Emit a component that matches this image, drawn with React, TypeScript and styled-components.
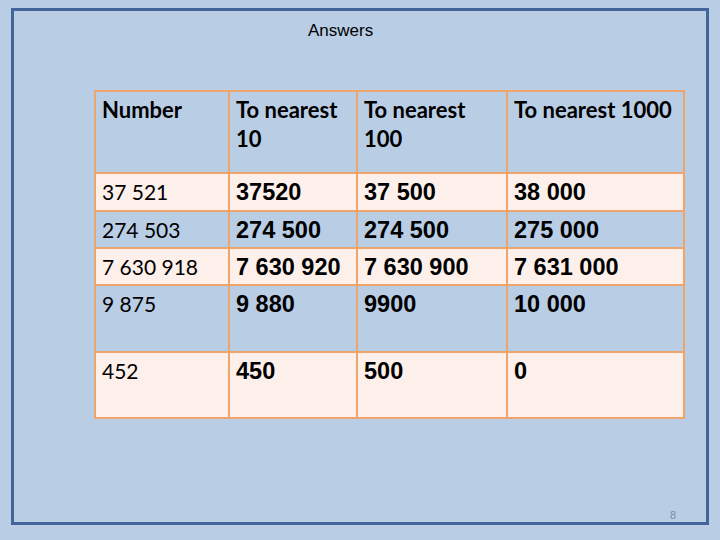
import React from "react";
import styled, { createGlobalStyle } from "styled-components";

const Global = createGlobalStyle`
  html, body { margin: 0; padding: 0; }
  body { background: #b9cde5; width: 720px; height: 540px; overflow: hidden; }
`;

const Frame = styled.div`
  box-sizing: border-box;
  width: 698px;
  height: 517px;
  margin: 8px 0 0 11px;
  border: 3px solid #41649a;
  display: flex;
  flex-direction: column;
`;

const Title = styled.div`
  font-family: "Liberation Sans", Arial, sans-serif;
  font-size: 17px;
  line-height: 20px;
  color: #000;
  padding: 10px 0 0 294px;
`;

const Table = styled.table`
  border-collapse: collapse;
  table-layout: fixed;
  width: 589px;
  margin: 49px 0 0 80px;
`;

const Row = styled.tr<{ $pale?: boolean; $h: number }>`
  height: ${(p) => p.$h}px;
  background: ${(p) => (p.$pale ? "#fdefe9" : "#b9cde5")};
`;

const HeadCell = styled.th`
  border: 2px solid #eea46a;
  text-align: left;
  vertical-align: top;
  padding: 3px 6px 0 6px;
  font-family: Lato, "Open Sans", sans-serif;
  font-weight: 700;
  font-size: 22px;
  line-height: 29px;
  color: #000;
`;

const Cell = styled.td<{ $plain?: boolean }>`
  border: 2px solid #eea46a;
  text-align: left;
  vertical-align: top;
  padding: 4px 6px 0 6px;
  color: #000;
  white-space: nowrap;
  font-family: ${(p) =>
    p.$plain ? 'Lato, "Open Sans", sans-serif' : '"Liberation Sans", Arial, sans-serif'};
  font-weight: ${(p) => (p.$plain ? 400 : 700)};
  font-size: ${(p) => (p.$plain ? "21px" : "23.5px")};
  line-height: 28px;
`;

const Footer = styled.div`
  margin-top: auto;
  text-align: right;
  padding: 0 30px 1px 0;
  font-family: "Liberation Sans", Arial, sans-serif;
  font-size: 11px;
  line-height: 12px;
  color: #7d8ca4;
`;

const rows: { h: number; pale: boolean; cells: string[] }[] = [
  { h: 38, pale: true, cells: ["37 521", "37520", "37 500", "38 000"] },
  { h: 37, pale: false, cells: ["274 503", "274 500", "274 500", "275 000"] },
  { h: 37, pale: true, cells: ["7 630 918", "7 630 920", "7 630 900", "7 631 000"] },
  { h: 67, pale: false, cells: ["9 875", "9 880", "9900", "10 000"] },
  { h: 66, pale: true, cells: ["452", "450", "500", "0"] },
];

export default function App() {
  return (
    <>
      <Global />
      <Frame>
        <Title>Answers</Title>
        <Table>
          <colgroup>
            <col style={{ width: 134 }} />
            <col style={{ width: 128 }} />
            <col style={{ width: 150 }} />
            <col style={{ width: 177 }} />
          </colgroup>
          <thead>
            <Row $h={82}>
              <HeadCell>Number</HeadCell>
              <HeadCell>
                To nearest
                <br />
                10
              </HeadCell>
              <HeadCell>
                To nearest
                <br />
                100
              </HeadCell>
              <HeadCell>To nearest 1000</HeadCell>
            </Row>
          </thead>
          <tbody>
            {rows.map((r, i) => (
              <Row key={i} $h={r.h} $pale={r.pale}>
                {r.cells.map((c, j) => (
                  <Cell key={j} $plain={j === 0}>
                    {c}
                  </Cell>
                ))}
              </Row>
            ))}
          </tbody>
        </Table>
        <Footer>8</Footer>
      </Frame>
    </>
  );
}
